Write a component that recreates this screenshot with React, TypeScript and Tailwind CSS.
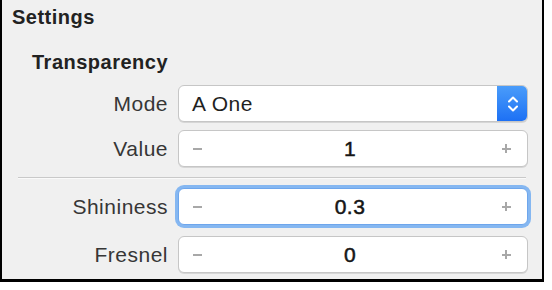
const font = { fontFamily: '"Liberation Sans", Arial, sans-serif' };

function Label({ children }: { children: string }) {
  return (
    <div className="w-[166px] shrink-0 text-right text-[21px] leading-[24px] tracking-[0.5px] text-[#363636]">
      {children}
    </div>
  );
}

function Stepper({ value, focused }: { value: string; focused?: boolean }) {
  return (
    <div
      className={`ml-[10px] flex h-full w-[350px] items-center rounded-[6px] border bg-white ${
        focused
          ? 'border-[#6ea6ec] shadow-[0_0_0_3px_#85b7f1]'
          : 'border-[#c6c6c6] shadow-[0_1px_0_#d6d6d6]'
      }`}
    >
      <div className="flex w-[30px] shrink-0 items-center pl-[14px]">
        <span className="block h-[2px] w-[9px] bg-[#a8a8a8]" />
      </div>
      <div className="flex-1 text-center text-[21px] leading-[24px] tracking-[0.5px] text-[#161616] [-webkit-text-stroke:0.5px_#161616]">
        {value}
      </div>
      <div className="flex w-[36px] shrink-0 items-center justify-center pr-[6px]">
        <span className="relative block size-[9px]">
          <span className="absolute left-0 top-[3.5px] h-[2px] w-[9px] bg-[#a8a8a8]" />
          <span className="absolute left-[3.5px] top-0 h-[9px] w-[2px] bg-[#a8a8a8]" />
        </span>
      </div>
    </div>
  );
}

export default function App() {
  return (
    <div className="h-[290px] w-[552px] bg-white" style={font}>
      <div className="h-[282px] w-[544px] border-x-2 border-b-[3px] border-black bg-[#f0f0f0]">
        <div className="pl-[10px] pt-[5px] text-[20px] font-bold leading-[24px] tracking-[0.5px] text-[#222]">
          Settings
        </div>
        <div className="mt-[21px] pl-[30px] text-[20px] font-bold leading-[24px] tracking-[0.5px] text-[#222]">
          Transparency
        </div>

        <div className="mt-[11px] flex h-[37px] items-center">
          <Label>Mode</Label>
          <div className="ml-[10px] flex h-full w-[350px] items-stretch overflow-hidden rounded-[6px] border border-[#c6c6c6] bg-white shadow-[0_1px_0_#d6d6d6]">
            <div className="flex flex-1 items-center pl-[13px] text-[21px] leading-[24px] tracking-[0.5px] text-[#1f1f1f]">
              A One
            </div>
            <div className="-my-px -mr-px flex w-[31px] items-center justify-center bg-gradient-to-b from-[#4b9dfa] to-[#1c6ff4]">
              <svg width="12" height="18" viewBox="0 0 12 18" fill="none" stroke="white" strokeWidth="2" strokeLinecap="round" strokeLinejoin="round">
                <path d="M2 6.5 L6 2.5 L10 6.5" />
                <path d="M2 11.5 L6 15.5 L10 11.5" />
              </svg>
            </div>
          </div>
        </div>

        <div className="mt-[8px] flex h-[37px] items-center">
          <Label>Value</Label>
          <Stepper value="1" />
        </div>

        <div className="ml-[16px] mt-[10px] h-px w-[508px] bg-[#c9c9c9]" />
        <div className="ml-[16px] h-px w-[508px] bg-[#fafafa]" />

        <div className="mt-[9px] flex h-[37px] items-center">
          <Label>Shininess</Label>
          <Stepper value="0.3" focused />
        </div>

        <div className="mt-[11px] flex h-[37px] items-center">
          <Label>Fresnel</Label>
          <Stepper value="0" />
        </div>
      </div>
    </div>
  );
}
